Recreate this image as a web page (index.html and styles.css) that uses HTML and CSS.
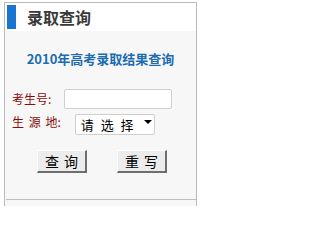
FILE: index.html
```html
<!DOCTYPE html>
<html lang="zh-CN">
<head>
<meta charset="utf-8">
<title>录取查询</title>
<link rel="stylesheet" href="styles.css">
</head>
<body>
<div class="panel">
  <div class="panel-head">
    <span class="bar"></span>
    <span class="head-title">录取查询</span>
  </div>
  <div class="panel-body">
    <form class="query">
      <div class="q-title">2010年高考录取结果查询</div>
      <div class="row row1">
        <label class="lbl" for="ksh">考生号:</label>
        <input class="txt" id="ksh" type="text">
      </div>
      <div class="row row2">
        <label class="lbl lbl-sp" for="syd">生 源 地:</label>
        <span class="sel-wrap">
          <select class="sel" id="syd"><option>请 选 择</option></select>
          <svg class="arrow" width="8" height="4" viewBox="0 0 8 4"><polygon points="0,0 8,0 4,4" fill="#000"/></svg>
        </span>
      </div>
      <div class="btns">
        <button type="button" class="btn">查 询</button>
        <button type="reset" class="btn">重 写</button>
      </div>
    </form>
    <div class="tail"></div>
  </div>
</div>
</body>
</html>
```
FILE: styles.css
```css
html, body {
  margin: 0;
  padding: 0;
  background: #ffffff;
}
body {
  font-family: "Noto Sans CJK SC", "Liberation Sans", sans-serif;
  width: 201px;
  height: 206px;
  overflow: hidden;
}
.panel {
  margin: 2px 0 0 4px;
  width: 193px;
  box-sizing: border-box;
  border: 1px solid #b9b9b9;
  border-bottom: none;
  height: 220px;
  display: flex;
  flex-direction: column;
}
.panel-head {
  height: 28px;
  background: #ffffff;
  display: flex;
  align-items: center;
}
.bar {
  display: block;
  width: 9px;
  height: 24px;
  margin-left: 2px;
  background: #1a74d2;
}
.head-title {
  margin-left: 11px;
  font-size: 16px;
  font-weight: bold;
  color: #3a3a3a;
  line-height: 20px;
}
.panel-body {
  flex: 1;
  background: #f7f7f7;
}
.query {
  margin: 0 0 0 1px;
  padding: 18px 0 26px 0;
  border-bottom: 1px solid #bdbdbd;
}
.q-title {
  text-align: center;
  font-size: 13px;
  font-weight: bold;
  color: #1b6cb0;
  line-height: 20px;
  margin-left: -1px;
}
.row {
  display: flex;
  align-items: center;
  padding-left: 6px;
}
.row1 {
  margin-top: 20px;
  height: 20px;
  gap: 13px;
}
.row2 {
  margin-top: 2px;
  height: 21px;
  gap: 14px;
}
.lbl {
  font-size: 12px;
  line-height: 16px;
  color: #8a0d0d;
}
.lbl-sp {
  word-spacing: 2px;
}
.txt {
  width: 108px;
  height: 20px;
  box-sizing: border-box;
  border: 1px solid #cfcfcf;
  border-radius: 2px;
  background: #ffffff;
  margin: 0;
  padding: 0 3px;
}
.sel-wrap {
  position: relative;
  display: block;
  width: 80px;
  height: 21px;
}
.sel {
  appearance: none;
  -webkit-appearance: none;
  width: 80px;
  height: 21px;
  box-sizing: border-box;
  border: 1px solid #cfcfcf;
  border-radius: 2px;
  background: #ffffff;
  margin: 0;
  padding: 0 0 0 5px;
  font-family: "Noto Sans CJK SC", sans-serif;
  font-size: 13px;
  line-height: 19px;
  color: #000;
  word-spacing: 4px;
}
.arrow {
  position: absolute;
  right: 3px;
  top: 9px;
}
.btns {
  margin-top: 18px;
  display: flex;
  justify-content: center;
  gap: 30px;
  padding-left: 2px;
}
.btn {
  width: 50px;
  height: 23px;
  box-sizing: border-box;
  margin: 0;
  padding: 0;
  background: #ececec;
  border-style: solid;
  border-width: 1px 2px 2px 1px;
  border-color: #ffffff #6e6e6e #6e6e6e #ffffff;
  font-family: "Noto Sans CJK SC", sans-serif;
  font-size: 14px;
  line-height: 19px;
  color: #000;
  word-spacing: 2px;
}
.tail {
  height: 10px;
}
```
